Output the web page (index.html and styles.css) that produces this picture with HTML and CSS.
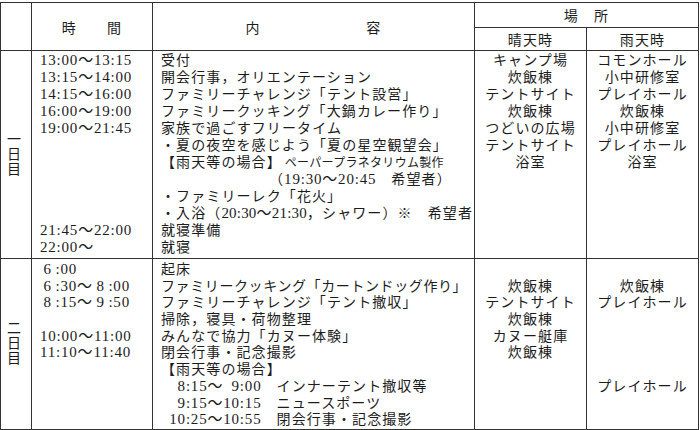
FILE: index.html
```html
<!DOCTYPE html>
<html lang="ja">
<head>
<meta charset="utf-8">
<title>日程表</title>
<link rel="stylesheet" href="styles.css">
</head>
<body>
<table class="sched">
  <colgroup>
    <col class="c-day"><col class="c-time"><col class="c-body"><col class="c-loc"><col class="c-loc">
  </colgroup>
  <thead>
    <tr class="h1">
      <th rowspan="2"></th>
      <th rowspan="2" class="h-time">時　　間</th>
      <th rowspan="2" class="h-body">内　　　　　　　容</th>
      <th colspan="2" class="h-place">場　所</th>
    </tr>
    <tr class="h2">
      <th>晴天時</th>
      <th>雨天時</th>
    </tr>
  </thead>
  <tbody>
    <tr class="d1">
      <td class="day"><span class="vt">一日目</span></td>
      <td class="time">
        <div class="ln"><span class="t">13:00～13:15</span></div>
        <div class="ln"><span class="t">13:15～14:00</span></div>
        <div class="ln"><span class="t">14:15～16:00</span></div>
        <div class="ln"><span class="t">16:00～19:00</span></div>
        <div class="ln"><span class="t">19:00～21:45</span></div>
        <div class="ln"></div>
        <div class="ln"></div>
        <div class="ln"></div>
        <div class="ln"></div>
        <div class="ln"></div>
        <div class="ln"><span class="t">21:45～22:00</span></div>
        <div class="ln"><span class="t">22:00～</span></div>
      </td>
      <td class="body">
        <div class="ln">受付</div>
        <div class="ln">開会行事，オリエンテーション</div>
        <div class="ln">ファミリーチャレンジ「テント設営」</div>
        <div class="ln">ファミリークッキング「大鍋カレー作り」</div>
        <div class="ln">家族で過ごすフリータイム</div>
        <div class="ln">・夏の夜空を感じよう「夏の星空観望会」</div>
        <div class="ln">【雨天等の場合】<span class="sm">ペーパープラネタリウム製作</span></div>
        <div class="ln"><span class="ind">（<span class="t">19:30～20:45</span>　希望者）</span></div>
        <div class="ln">・ファミリーレク「花火」</div>
        <div class="ln">・入浴（<span class="t tight">20:30～21:30</span>，シャワー）※　希望者</div>
        <div class="ln">就寝準備</div>
        <div class="ln">就寝</div>
      </td>
      <td class="loc">
        <div class="ln">キャンプ場</div>
        <div class="ln">炊飯棟</div>
        <div class="ln">テントサイト</div>
        <div class="ln">炊飯棟</div>
        <div class="ln">つどいの広場</div>
        <div class="ln">テントサイト</div>
        <div class="ln">浴室</div>
      </td>
      <td class="loc">
        <div class="ln">コモンホール</div>
        <div class="ln">小中研修室</div>
        <div class="ln">プレイホール</div>
        <div class="ln">炊飯棟</div>
        <div class="ln">小中研修室</div>
        <div class="ln">プレイホール</div>
        <div class="ln">浴室</div>
      </td>
    </tr>
    <tr class="d2">
      <td class="day"><span class="vt">二日目</span></td>
      <td class="time">
        <div class="ln"><span class="t"><span class="fw">6</span>:00</span></div>
        <div class="ln"><span class="t"><span class="fw">6</span>:30～<span class="fw">8</span>:00</span></div>
        <div class="ln"><span class="t"><span class="fw">8</span>:15～<span class="fw">9</span>:50</span></div>
        <div class="ln"></div>
        <div class="ln"><span class="t">10:00～11:00</span></div>
        <div class="ln"><span class="t">11:10～11:40</span></div>
      </td>
      <td class="body">
        <div class="ln">起床</div>
        <div class="ln narrow">ファミリークッキング「カートンドッグ作り」</div>
        <div class="ln">ファミリーチャレンジ「テント撤収」</div>
        <div class="ln">掃除，寝具・荷物整理</div>
        <div class="ln">みんなで協力「カヌー体験」</div>
        <div class="ln">閉会行事・記念撮影</div>
        <div class="ln">【雨天等の場合】</div>
        <div class="ln"><span class="hs"></span><span class="hs"></span><span class="t">8:15～<span class="hs"></span>9:00</span>　インナーテント撤収等</div>
        <div class="ln"><span class="hs"></span><span class="hs"></span><span class="t">9:15～10:15</span>　ニュースポーツ</div>
        <div class="ln"><span class="hs"></span><span class="t">10:25～10:55</span>　閉会行事・記念撮影</div>
      </td>
      <td class="loc">
        <div class="ln"></div>
        <div class="ln">炊飯棟</div>
        <div class="ln">テントサイト</div>
        <div class="ln">炊飯棟</div>
        <div class="ln">カヌー艇庫</div>
        <div class="ln">炊飯棟</div>
      </td>
      <td class="loc">
        <div class="ln"></div>
        <div class="ln">炊飯棟</div>
        <div class="ln">プレイホール</div>
        <div class="ln"></div>
        <div class="ln"></div>
        <div class="ln"></div>
        <div class="ln"></div>
        <div class="ln">プレイホール</div>
      </td>
    </tr>
  </tbody>
</table>
</body>
</html>
```

FILE: styles.css
```css
html, body {
  margin: 0;
  padding: 0;
  background: #ffffff;
}

body {
  font-family: "Noto Sans CJK JP", "Noto Sans", sans-serif;
  font-size: 14px;
  color: #1c1c1c;
}

.sched {
  border-collapse: collapse;
  table-layout: fixed;
  width: 699px;
  margin-top: 2px;
  letter-spacing: 1.1px;
}

.c-day { width: 31px; }
.c-time { width: 121px; }
.c-body { width: 322px; }
.c-loc { width: 112px; }

.sched th,
.sched td {
  border: 1px solid #333333;
  padding: 0;
  font-weight: normal;
}

.h1 th {
  height: 24px;
  text-align: center;
  vertical-align: middle;
}

.h-place {
  padding-top: 2px;
}

.h-body {
  padding-left: 10px;
}

.h2 th {
  height: 22px;
  text-align: center;
  vertical-align: middle;
}

.sched td {
  vertical-align: top;
}

.d1 td {
  height: 205px;
}

.d2 td {
  height: 168px;
  padding-top: 1px;
}

.sched td.day {
  vertical-align: middle;
  text-align: center;
  padding-right: 4px;
  padding-top: 2px;
}

.vt {
  display: inline-block;
  writing-mode: vertical-rl;
  letter-spacing: 0.6px;
  line-height: 1;
}

.ln {
  height: 17px;
  line-height: 17px;
  white-space: nowrap;
}

.d2 .ln {
  height: 16.7px;
  line-height: 16.7px;
}

.ln.narrow {
  letter-spacing: 0.6px;
}

.sched td.time {
  padding-left: 8px;
}

.sched td.body {
  padding-left: 8px;
}

.loc {
  text-align: center;
}

.t {
  font-family: "Liberation Serif", "Noto Sans CJK JP", serif;
  font-size: 15px;
  letter-spacing: 0.8px;
}

.t.tight {
  letter-spacing: 0.2px;
}

.ind {
  padding-left: 108px;
}

.fw {
  display: inline-block;
  width: 15.5px;
  text-align: center;
}

.hs {
  display: inline-block;
  width: 8.3px;
}

.sm {
  font-size: 12px;
  letter-spacing: 0.3px;
  margin-left: 3px;
}
```
